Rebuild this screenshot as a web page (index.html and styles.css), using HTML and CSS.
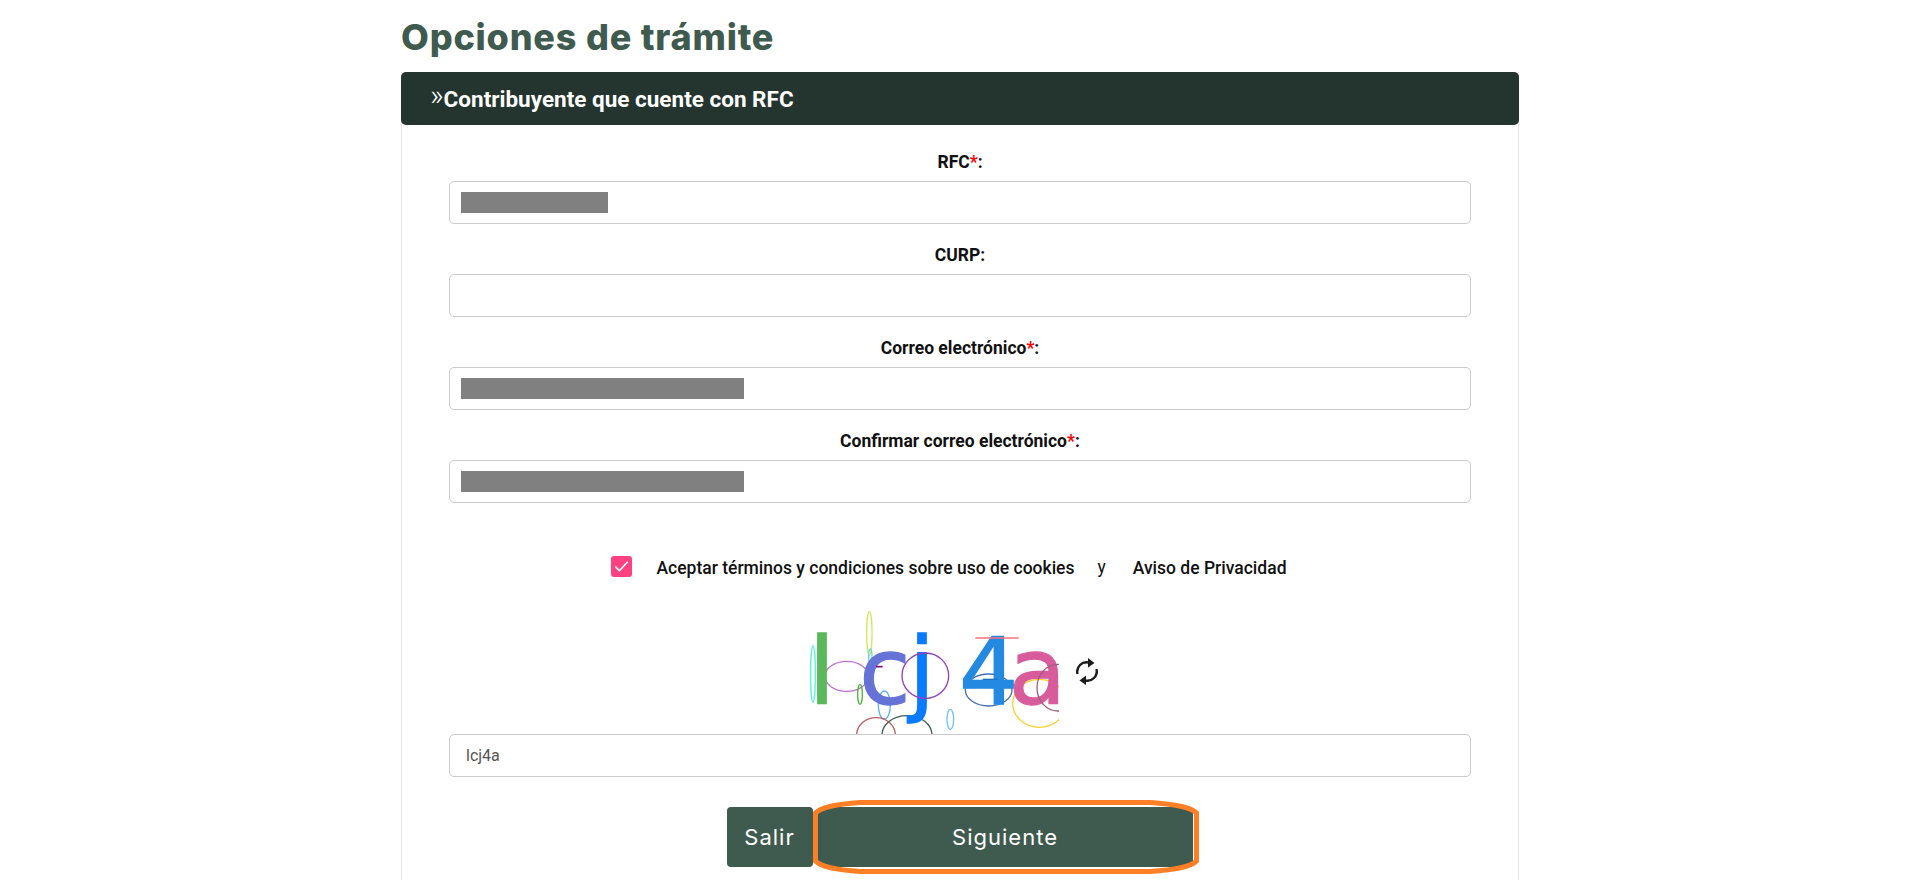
FILE: index.html
```html
<!DOCTYPE html>
<html lang="es">
<head>
  <meta charset="UTF-8">
  <meta name="viewport" content="width=device-width, initial-scale=1.0">
  <title>Opciones de trámite</title>
  <link rel="stylesheet" href="styles.css">
</head>
<body>
  <div class="container">
    <h1 class="page-title">Opciones de trámite</h1>

    <div class="card">
      <div class="card-header">
        <span class="chevrons">»</span><span>Contribuyente que cuente con RFC</span>
      </div>

      <div class="card-body">
        <!-- Form fields -->
        <div class="form-row">
          <label class="form-label">RFC<span class="required">*</span>:</label>
          <div class="form-input"><span class="redacted redacted-short"></span></div>
        </div>
        <div class="form-row">
          <label class="form-label">CURP:</label>
          <div class="form-input"></div>
        </div>
        <div class="form-row">
          <label class="form-label">Correo electrónico<span class="required">*</span>:</label>
          <div class="form-input"><span class="redacted redacted-long"></span></div>
        </div>
        <div class="form-row">
          <label class="form-label">Confirmar correo electrónico<span class="required">*</span>:</label>
          <div class="form-input"><span class="redacted redacted-long"></span></div>
        </div>

        <!-- Terms -->
        <div class="terms">
          <span class="checkbox">
            <svg viewBox="0 0 20 20" fill="none" stroke="#fff" stroke-width="1.6" stroke-linecap="round" stroke-linejoin="round">
              <path d="M4.500 10.500l3.500 3.500L15.500 6"></path>
            </svg>
          </span>
          <span class="terms-text">Aceptar términos y condiciones sobre uso de cookies</span>
          <span class="terms-and">y</span>
          <span class="terms-text">Aviso de Privacidad</span>
        </div>

        <!-- Captcha -->
        <div class="captcha">
          <svg class="captcha-image" viewBox="54 30 780 372" fill="none" stroke-width="4">
            <ellipse cx="96" cy="222" rx="7" ry="85" stroke="#5ff0dc"></ellipse>
            <ellipse cx="265" cy="100" rx="8" ry="65" stroke="#d0e860"></ellipse>
            <ellipse cx="268" cy="172" rx="5" ry="25" stroke="#5fd8e0"></ellipse>
            <ellipse cx="197" cy="229" rx="65" ry="45" stroke="#c070d0"></ellipse>
            <ellipse cx="237" cy="283" rx="7" ry="30" stroke="#50b040"></ellipse>
            <ellipse cx="310" cy="315" rx="18" ry="42" stroke="#60b0ff"></ellipse>
            <ellipse cx="285" cy="405" rx="58" ry="52" stroke="#c06060"></ellipse>
            <ellipse cx="378" cy="405" rx="75" ry="58" stroke="#406050"></ellipse>
            <ellipse cx="508" cy="358" rx="10" ry="30" stroke="#70c0ff"></ellipse>
            <ellipse cx="623" cy="270" rx="70" ry="48" stroke="#4070b0"></ellipse>
            <ellipse cx="775" cy="310" rx="80" ry="72" stroke="#ffd030"></ellipse>
            <text class="captcha-char" x="84" y="311" fill="#5cb85c" stroke="#5cb85c">l</text>
            <text class="captcha-char" x="235" y="311" fill="#6673d6" stroke="#6673d6">c</text>
            <text class="captcha-char" x="384" y="311" fill="#0a7bff" stroke="#0a7bff">j</text>
            <text class="captcha-char" x="534" y="311" fill="#2489e0" stroke="#2489e0">4</text>
            <text class="captcha-char" x="683" y="311" fill="#d85c9c" stroke="#d85c9c">a</text>
            <ellipse cx="433" cy="227" rx="70" ry="68" stroke="#9040c0"></ellipse>
            <ellipse cx="830" cy="263" rx="62" ry="70" stroke="#a06080"></ellipse>
            <path d="M285 200h20" stroke="#900080" stroke-width="5"></path>
            <path d="M583 114h130" stroke="#ff7080"></path>
            <path d="M605 238h45" stroke="#2070c0"></path>
          </svg>
          <svg class="refresh-icon" viewBox="0 0 24 28" fill="none" stroke="#1c1c1c" stroke-width="2.400">
            <path d="M1.500 16A9.500 9.500 0 0 1 13 4.500"></path>
            <path d="M20.500 11A9.500 9.500 0 0 1 9 22.500"></path>
            <path d="M12 0l6.500 5L12 9.500z" fill="#1c1c1c" stroke="none"></path>
            <path d="M10 17.500L3.500 22.500 10 27z" fill="#1c1c1c" stroke="none"></path>
          </svg>
        </div>
        <div class="form-input captcha-input">lcj4a</div>

        <!-- Actions -->
        <div class="actions">
          <button class="btn btn-exit">Salir</button>
          <span class="btn-highlight">
            <button class="btn btn-next">Siguiente</button>
            <svg class="highlight-ring" viewBox="0 0 386 74" fill="none">
              <path d="M47 2.500H337Q376 5 383.500 13V61Q376 69 337 71.500H47Q10 69 2.500 61V13Q10 5 47 2.500Z" stroke="#ff7f27" stroke-width="5"></path>
            </svg>
          </span>
        </div>
      </div>
    </div>
  </div>
</body>
</html>
```

FILE: styles.css
```css
* {
  margin: 0;
  padding: 0;
  box-sizing: border-box;
}

body {
  background-color: #fff;
  font-family: Roboto, "Liberation Sans", Arial, sans-serif;
  color: #111;
  overflow: hidden;
}

.container {
  width: 1118px;
  margin-left: 401px;
}

.page-title {
  height: 72px;
  padding-top: 14px;
  font-family: Inter, "Open Sans", sans-serif;
  font-size: 36px;
  font-weight: 800;
  letter-spacing: 0.8px;
  line-height: 46px;
  color: #3f5b4f;
}

.card {
  height: 808px;
  border-left: 1px solid #e6e6e6;
  border-right: 1px solid #e6e6e6;
}

.card-header {
  display: flex;
  align-items: center;
  height: 53px;
  margin: 0 -1px;
  padding-left: 29px;
  background-color: #24342e;
  border-radius: 5px;
  color: #fff;
  font-size: 22.500px;
  font-weight: 700;
}

.chevrons {
  font-size: 30px;
  font-weight: 300;
  line-height: 30px;
  margin-top: -8px;
}

.card-body {
  padding: 0 47px;
}

.form-row {
  padding-top: 19px;
}

.form-row:first-child {
  padding-top: 25px;
}

.form-label {
  display: block;
  height: 24px;
  margin-bottom: 7px;
  text-align: center;
  font-size: 17.500px;
  font-weight: 700;
  line-height: 24px;
}

.required {
  color: #f00;
}

.form-input {
  display: flex;
  align-items: center;
  height: 43px;
  padding-left: 11px;
  background-color: #fff;
  border: 1px solid #ccc;
  border-radius: 5px;
}

.redacted {
  display: block;
  height: 21px;
  background-color: #808080;
}

.redacted-short {
  width: 147px;
}

.redacted-long {
  width: 283px;
}

.terms {
  display: flex;
  align-items: center;
  justify-content: center;
  height: 22px;
  margin-top: 53px;
  padding-right: 22px;
  font-size: 17.500px;
  font-weight: 500;
}

.checkbox {
  display: block;
  width: 21px;
  height: 21px;
  margin: -2px 24px 0 0;
  background-color: #ff4081;
  border-radius: 3px;
}

.checkbox svg {
  display: block;
}

.terms-text {
  padding-top: 1px;
}

.terms-and {
  margin: 0 27px 0 23px;
  font-weight: 400;
}

.captcha {
  display: flex;
  align-items: center;
  height: 124px;
  margin-top: 32px;
  padding-left: 350px;
}

.captcha-image {
  width: 260px;
  height: 124px;
}

.captcha-char {
  font-family: "DejaVu Sans", sans-serif;
  font-size: 280px;
}

.refresh-icon {
  width: 24px;
  height: 28px;
  margin-left: 17px;
}

.captcha-input {
  padding-left: 16px;
  color: #555;
  font-size: 16px;
}

.actions {
  display: flex;
  align-items: center;
  justify-content: center;
  height: 60px;
  margin-top: 30px;
  padding-right: 1px;
}

.btn {
  display: block;
  height: 60px;
  background-color: #3f5b4f;
  border: none;
  border-radius: 4px;
  color: #fff;
  font-family: Inter, "Open Sans", sans-serif;
  font-size: 22px;
  font-weight: 400;
  letter-spacing: 1px;
}

.btn-exit {
  width: 86px;
}

.btn-next {
  width: 375px;
}

.btn-highlight {
  position: relative;
  display: block;
  margin-left: 5px;
}

.highlight-ring {
  position: absolute;
  left: -5px;
  top: -7px;
  width: 386px;
  height: 74px;
}
```
